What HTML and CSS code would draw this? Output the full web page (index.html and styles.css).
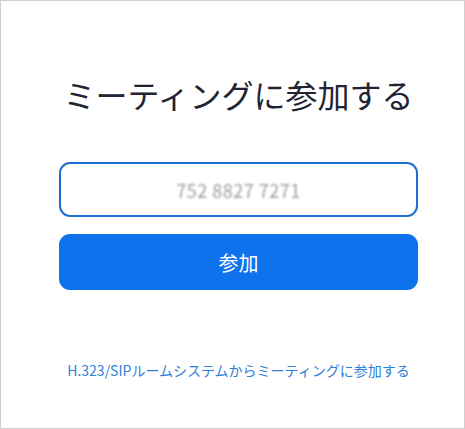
FILE: index.html
```html
<!DOCTYPE html>
<html lang="ja">
<head>
    <meta charset="UTF-8">
    <meta name="viewport" content="width=device-width, initial-scale=1.0">
    <title>ミーティングに参加する</title>
    <link rel="stylesheet" href="styles.css">
</head>
<body>
    <div class="frame">
        <div class="join-box">
            <h1 class="join-title">ミーティングに参加する</h1>
            <div class="meeting-input">
                <span class="meeting-id">752 8827 7271</span>
            </div>
            <button class="btn-join">参加</button>
            <a class="sip-link" href="#">H.323/SIPルームシステムからミーティングに参加する</a>
        </div>
    </div>
</body>
</html>
```

FILE: styles.css
```css
body {
    margin: 0;
    font-family: "Noto Sans CJK JP", "Noto Sans", sans-serif;
    background: #fff;
}
.frame {
    width: 465px;
    height: 429px;
    box-sizing: border-box;
    border: 1px solid #cfcfcf;
    padding: 0 46px 0 58px;
}
.join-box {
    display: flex;
    flex-direction: column;
    align-items: stretch;
}
.join-title {
    margin: 71px 0 0;
    font-size: 32px;
    font-weight: normal;
    line-height: 44px;
    color: #232333;
    text-align: center;
}
.meeting-input {
    margin-top: 46px;
    height: 55px;
    box-sizing: border-box;
    border: 2px solid #1f6fd0;
    border-radius: 11px;
    display: flex;
    align-items: center;
    justify-content: center;
}
.meeting-id {
    font-size: 18px;
    color: #9a9aa4;
    filter: blur(1.2px);
    letter-spacing: 0.5px;
}
.btn-join {
    margin-top: 17px;
    height: 56px;
    border: none;
    border-radius: 11px;
    background: #0e72ed;
    color: #fff;
    font-family: inherit;
    font-size: 20px;
}
.sip-link {
    margin-top: 70px;
    font-size: 14px;
    color: #2f7fd8;
    text-decoration: none;
    text-align: center;
}
```
